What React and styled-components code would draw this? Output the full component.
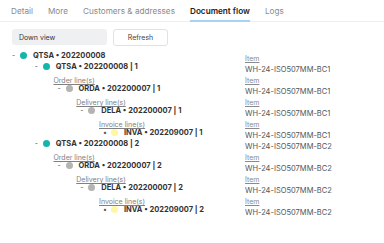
import React from "react";
import styled, { createGlobalStyle } from "styled-components";

const GlobalStyle = createGlobalStyle`
  body {
    margin: 0;
    background: #ffffff;
    font-family: Inter, "Noto Sans", "Liberation Sans", sans-serif;
  }
`;

const tabs = ["Detail", "More", "Customers & addresses", "Document flow", "Logs"];

const dotColors = {
  teal: "#14b5ab",
  gray: "#b4b4b4",
  yellow: "#fdf8a6",
};

const rows = [
  { kind: "node", level: 0, code: "QTSA", num: "202200008", dot: "teal", right: "Item" },
  { kind: "node", level: 1, code: "QTSA", num: "202200008 | 1", dot: "teal", value: "WH-24-ISO507MM-BC1" },
  { kind: "label", level: 2, text: "Order line(s)", right: "Item" },
  { kind: "node", level: 2, code: "ORDA", num: "202200007 | 1", dot: "gray", value: "WH-24-ISO507MM-BC1" },
  { kind: "label", level: 3, text: "Delivery line(s)", right: "Item" },
  { kind: "node", level: 3, code: "DELA", num: "202200007 | 1", dot: "gray", value: "WH-24-ISO507MM-BC1" },
  { kind: "label", level: 4, text: "Invoice line(s)", right: "Item" },
  { kind: "node", level: 4, code: "INVA", num: "202209007 | 1", dot: "yellow", leaf: true, value: "WH-24-ISO507MM-BC1" },
  { kind: "node", level: 1, code: "QTSA", num: "202200008 | 2", dot: "teal", value: "WH-24-ISO507MM-BC2" },
  { kind: "label", level: 2, text: "Order line(s)", right: "Item" },
  { kind: "node", level: 2, code: "ORDA", num: "202200007 | 2", dot: "gray", value: "WH-24-ISO507MM-BC2" },
  { kind: "label", level: 3, text: "Delivery line(s)", right: "Item" },
  { kind: "node", level: 3, code: "DELA", num: "202200007 | 2", dot: "gray", value: "WH-24-ISO507MM-BC2" },
  { kind: "label", level: 4, text: "Invoice line(s)", right: "Item" },
  { kind: "node", level: 4, code: "INVA", num: "202209007 | 2", dot: "yellow", leaf: true, value: "WH-24-ISO507MM-BC2" },
];

function App() {
  return (
    <Page>
      <GlobalStyle />
      <TabBar>
        {tabs.map((t) => (
          <Tab key={t} $active={t === "Document flow"}>
            {t}
          </Tab>
        ))}
      </TabBar>
      <Toolbar>
        <ViewBox>Down view</ViewBox>
        <RefreshButton>Refresh</RefreshButton>
      </Toolbar>
      <Tree>
        {rows.map((row, i) => (
          <Row key={i}>
            {row.kind === "node" ? (
              <NodeCell $level={row.level}>
                <Toggle>{row.leaf ? "•" : "-"}</Toggle>
                <Dot $color={dotColors[row.dot]} />
                <NodeText>
                  {row.code} • {row.num}
                </NodeText>
              </NodeCell>
            ) : (
              <LabelCell $level={row.level}>
                <LinkText>{row.text}</LinkText>
              </LabelCell>
            )}
            <RightCell>
              {row.right ? <ItemLabel>{row.right}</ItemLabel> : <ItemValue>{row.value}</ItemValue>}
            </RightCell>
          </Row>
        ))}
      </Tree>
    </Page>
  );
}

export default App;

const Page = styled.div`
  width: 384px;
  height: 243px;
  overflow: hidden;
  background: #fff;
`;

const TabBar = styled.div`
  display: flex;
  align-items: stretch;
  gap: 15px;
  height: 22px;
  padding-left: 11px;
  border-bottom: 1px solid #efefef;
  box-sizing: border-box;
`;

const Tab = styled.div`
  display: flex;
  align-items: center;
  font-size: 8.2px;
  color: ${(p) => (p.$active ? "#222" : "#8a8a8a")};
  font-weight: ${(p) => (p.$active ? 600 : 400)};
  border-bottom: 2px solid ${(p) => (p.$active ? "#a8d2f2" : "transparent")};
  padding-top: 1px;
  margin-bottom: -1px;
`;

const Toolbar = styled.div`
  display: flex;
  gap: 6px;
  padding: 7px 0 0 12px;
`;

const ViewBox = styled.div`
  width: 95px;
  height: 16px;
  box-sizing: border-box;
  padding-left: 7px;
  display: flex;
  align-items: center;
  background: #eef0f2;
  border-radius: 3px;
  font-size: 7px;
  color: #333;
`;

const RefreshButton = styled.div`
  width: 55px;
  height: 17px;
  box-sizing: border-box;
  display: flex;
  align-items: center;
  justify-content: center;
  border: 1px solid #e2e2e2;
  border-radius: 3px;
  font-size: 7px;
  color: #444;
`;

const Tree = styled.div`
  display: flex;
  flex-direction: column;
  margin-top: -1px;
`;

const Row = styled.div`
  display: grid;
  grid-template-columns: 245px 1fr;
  height: 11px;
  align-items: center;
`;

const NodeCell = styled.div`
  display: flex;
  align-items: center;
  padding-left: ${(p) => 12 + p.$level * 22.75}px;
`;

const Toggle = styled.span`
  width: 8px;
  font-size: 7px;
  color: #555;
`;

const Dot = styled.span`
  width: 7px;
  height: 7px;
  border-radius: 50%;
  background: ${(p) => p.$color};
  margin-right: 6px;
  flex-shrink: 0;
`;

const NodeText = styled.span`
  font-size: 7.5px;
  font-weight: 700;
  color: #333;
  white-space: nowrap;
`;

const LabelCell = styled.div`
  padding-left: ${(p) => 8 + p.$level * 22.75}px;
`;

const LinkText = styled.span`
  font-size: 7px;
  color: #808080;
  text-decoration: underline;
  white-space: nowrap;
`;

const RightCell = styled.div`
  white-space: nowrap;
`;

const ItemLabel = styled.span`
  font-size: 7px;
  color: #8a8a8a;
  text-decoration: underline;
`;

const ItemValue = styled.span`
  font-size: 7.5px;
  color: #555;
`;
